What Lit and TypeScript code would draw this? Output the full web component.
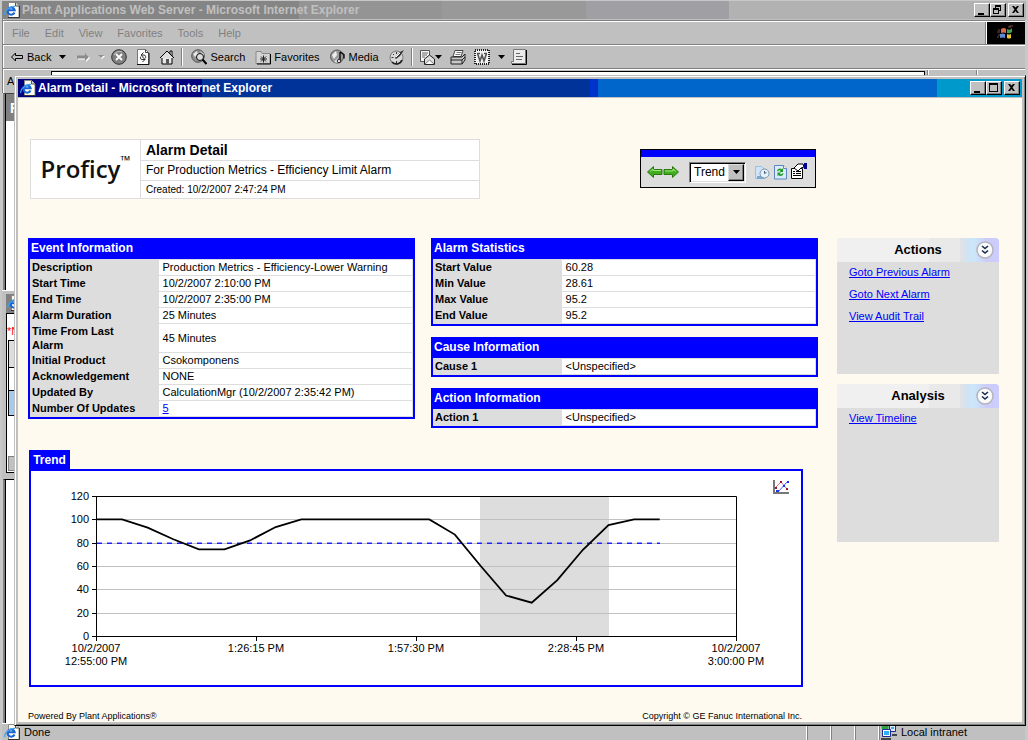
import { LitElement, html, svg, css, nothing, TemplateResult } from "lit";
import { customElement, property, state } from "lit/decorators.js";

const icon = (size: number, body: TemplateResult, w = size) =>
  html`<svg class="icon" width=${w} height=${size} viewBox="0 0 ${w} ${size}" aria-hidden="true">${body}</svg>`;

const icons: Record<string, () => TemplateResult> = {
  page: () => icon(16, svg`
    <path d="M4.500 .5h7l3.500 3.500v11.500h-10.500z" fill="#fffdf2" stroke="#8a8a8a" />
    <path d="M15.500 4v11.500H4" fill="none" stroke="#333" /><path d="M11.500 .5v3.500h3.500" fill="#ddd" stroke="#555" />
    <path d="M10.500 10.500a3.600 3.600 0 1 1 .2-2.300H4.500" fill="none" stroke="#1565d8" stroke-width="2" />
    <path d="M1 13C-.5 10 5 4 11 4.500" fill="none" stroke="#3fa0f0" stroke-width="1.300" />`),
  back: () => icon(12, svg`<path d="M1.500 6 5.500 2v2.500h7v3h-7V10z" fill="#c0c0c0" stroke="#000" />`, 14),
  forward: () => icon(12, svg`<path d="M14 7 10 3v2.500H2v3h8V11z" fill="#fff" /><path d="M13 6 9 2v2.500H1v3h8V10z" fill="#8c8c8c" />`, 14),
  caret: () => icon(4, svg`<path d="M0 0h7L3.500 4z" fill="#000" />`, 7),
  caretOff: () => icon(4, svg`<path d="M1 1h6L4 4z" fill="#fff" /><path d="M0 0h6L3 3z" fill="#909090" />`, 7),
  stop: () => icon(16, svg`
    <circle cx="8" cy="8" r="7.300" fill="#808080" stroke="#303030" />
    <path d="M3 6a6 6 0 0 1 8-3" fill="none" stroke="#c8c8c8" />
    <path d="m5 5 6 6m0-6-6 6" stroke="#fff" stroke-width="1.800" />`),
  refresh: () => icon(16, svg`
    <path d="M2.500 .5h8l3 3v12h-11z" fill="#fff" stroke="#777" /><path d="M14 4v11.500H2" fill="none" stroke="#111" /><path d="M10.500 .5v3h3" fill="none" stroke="#444" />
    <path d="M8.500 3.500 6 6l2.500 2M6 6h3c2 0 2 3 1 3.500M7.500 8 10 10.500 7.500 13M10 10.500H7C5 10.500 5 8 6 7.500" fill="none" stroke="#333" />`),
  home: () => icon(16, svg`
    <path d="M11 2h2v5h-2z" fill="#fff" stroke="#000" />
    <path d="M3 8h10v7H3z" fill="#e8e8e8" stroke="#000" /><path d="M1 9 8 2l7 7" fill="#ddd" stroke="#000" />
    <path d="M7 10h3v5H7z" fill="#555" />`),
  search: () => icon(16, svg`
    <circle cx="7" cy="7" r="6.300" fill="#909090" stroke="#555" />
    <path d="M2 5l4-3 1 3-3 3zM9 2l4 3-1 2z" fill="#e8e8e8" />
    <circle cx="9" cy="8" r="3.500" fill="#dcdcdc" stroke="#111" /><path d="m11.500 10.500 4 4.500" stroke="#000" stroke-width="2" />`),
  favorites: () => icon(16, svg`
    <path d="M1 2.500h5l1 2h8v10H1z" fill="#d4d4d4" stroke="#888" /><path d="M15.500 5v10H2" fill="none" stroke="#000" />
    <path d="M8.500 6.500v7M5 10h7M6 7.500l5 5m0-5-5 5" stroke="#222" />`),
  media: () => icon(16, svg`
    <circle cx="7" cy="7.500" r="6.500" fill="#9c9c9c" stroke="#555" /><path d="M2 6l4-4 1 4-3 4zM4 13l4-4v5z" fill="#eee" />
    <path d="M10 3v9M10 3l4 2.500v4" fill="none" stroke="#000" stroke-width="1.300" /><circle cx="9" cy="12" r="1.800" fill="#ddd" stroke="#222" />`),
  history: () => icon(16, svg`
    <circle cx="7.500" cy="8.500" r="6.500" fill="#d8d8d8" stroke="#777" />
    <path d="M3 13a6 6 0 0 0 10-2" fill="none" stroke="#222" stroke-width="1.800" />
    <path d="M7.500 3v2M2.500 8.500h2M7.500 12v2M4 5l1 1" stroke="#333" /><path d="m6 9 5-6 4-2-4 6-4 3z" fill="#333" /><path d="m7 8 4-4" stroke="#fff" />`),
  mail: () => icon(16, svg`
    <path d="M1.500 1.500h9v11h-9z" fill="#f4f4f4" stroke="#555" /><path d="M3 4h6M3 6h5M3 8h3" stroke="#666" />
    <path d="m5.500 10 5-4 5 4v5.500h-10z" fill="#ddd" stroke="#222" /><path d="m6 15 4.500-4 4.500 4" fill="#fff" stroke="#777" />`),
  print: () => icon(16, svg`
    <path d="M5 1.500h8l-2 6H3z" fill="#fff" stroke="#444" /><path d="M6.500 3.500h5M5.500 5.500h5" stroke="#777" />
    <path d="M1 8h11l3-3v6l-3 4H1z" fill="#c8c8c8" stroke="#222" /><path d="M1 11h11l3-3M12 11v4" fill="none" stroke="#222" />`),
  word: () => icon(16, svg`
    <path d="M1 1h14v14H1z" fill="#f4f4f4" stroke="#222" stroke-width="2" stroke-dasharray="1 1" />
    <path d="M3.500 4.500 6 12 8 6l2 6 2.500-7.500M3 4.500h3M10 4.500h3" fill="none" stroke="#555" stroke-width="1.600" />`),
  discuss: () => icon(16, svg`
    <path d="M2.500 .5h12v14h-14v-2h2z" fill="#ececec" stroke="#777" /><path d="M15.500 1v14.500H1" fill="none" stroke="#000" />
    <path d="M5 4.500h4M5 7.500h7M5 10.500h6" stroke="#666" />`),
  winLogo: () => icon(18, svg`
    <path d="M4 5q3-2 5 0v4q-3-1-5 0z" fill="#d9694a" /><path d="M10 5q3 2 5-1v4q-2 2-5 1z" fill="#3aa04a" />
    <path d="M3 10q3-1 5 0v4q-2-1-5 0z" fill="#5a8ad8" /><path d="M10 10q2 1 4 0v4q-2 1-4 0z" fill="#e8c830" />
    <path d="M1 6h2M0 8h3M1 11h2M0 13h2M12 2h4M11 3h3" stroke="#7a4a40" />`),
  arrowLeft: () => icon(14, svg`<path d="M.5 7 6.500 1.500v3H15v5H6.500v3z" fill="#3fae1c" stroke="#2b7a14" /><path d="M3 6.500 6 4v1.500h8" fill="none" stroke="#a5e47c" />`, 16),
  arrowRight: () => icon(14, svg`<path d="M15.500 7 9.500 1.500v3H1v5h8.500v3z" fill="#3fae1c" stroke="#2b7a14" /><path d="M2 6h8V4l3 2.500" fill="none" stroke="#a5e47c" />`, 16),
  timeDoc: () => icon(16, svg`
    <path d="M1.500 2.500h6l3 3v9h-9z" fill="#cfe4f6" stroke="#9fc0dc" /><path d="M3 12h7v3H3z" fill="#7ba6cf" />
    <circle cx="10.500" cy="9.500" r="4.500" fill="#e6f0f8" stroke="#7894b0" /><path d="M10.500 7v2.500l2-1" fill="none" stroke="#44617e" />`),
  reload: () => icon(16, svg`
    <path d="M2.500 1.500h9l3 3v10.500h-12z" fill="#dcebfc" stroke="#5a86c4" /><path d="M11.500 1.500v3h3" fill="#fff" stroke="#5a86c4" />
    <path d="M5 7c1-3 4-3 5-1.500L11 4v4H7.500l1.200-1.200C8 6 6.500 6 6 7.500zM11.500 9.500c-1 3-4 3-5 1.500L5.500 12.500v-4H9L7.800 9.800c.7.800 2.200.800 2.700-.5z" fill="#1d9a20" />`),
  properties: () => icon(18, svg`
    <path d="M1.500 5.500h11v10h-11z" fill="#fff" stroke="#000" /><path d="M3 8.500h2M6 8.500h5M3 10.500h2M6 10.500h5M3 12.500h8" stroke="#000" />
    <path d="m4 5 4-4h5l1 3-3 1-3 3z" fill="#fff" stroke="#000" /><path d="M14 0h3v6h-3z" fill="#000090" />`),
  chart: () => icon(16, svg`
    <path d="M1 1v13h15" fill="none" stroke="#777" stroke-width="2" />
    <path d="M3 8l5-5 6 7" fill="none" stroke="#d070a0" /><path d="M3 12h3L14 3" fill="none" stroke="#5060ff" />
    <path d="M2 8h2v2H2zM7 2h2v2H7zM13 9h2v2h-2z" fill="#a01020" /><path d="M3 11h3v2H3zM10 6h2v2h-2zM14 2h2v2h-2z" fill="#2030f0" />`),
  chevrons: () => icon(20, svg`
    <circle cx="10" cy="10" r="8" fill="#fafafa" stroke="#b4b4bc" stroke-width="1.500" />
    <path d="m7 6 3 2.500L13 6M7 10.500l3 2.500 3-2.500" fill="none" stroke="#1c2c50" stroke-width="1.600" />`),
  network: () => icon(16, svg`
    <circle cx="4" cy="3" r="3.500" fill="#30a040" /><path d="M8.500 1.500h6v6h-6z" fill="#e8e8ff" stroke="#1a2a90" /><path d="M10 3h3v2h-3z" fill="#30b0f0" />
    <path d="M1.500 5.500h8v7h-8z" fill="#fff" stroke="#1a2a90" /><path d="M3 7h5v4H3z" fill="#30b0f0" />
    <path d="M0 14h10v2H0zM11 10h5v2h-5z" fill="#444" />`),
};

const winGlyphs: Record<string, TemplateResult> = {
  Minimize: svg`<path d="M3 9h6v2H3z" />`,
  Restore: svg`<path d="M4 1h6v6H8V6h1V3H5v1H4zM2 4h6v6H2zm1 2v3h4V6z" fill-rule="evenodd" />`,
  Maximize: svg`<path d="M2 1h9v9H2zm1 2v6h7V3z" fill-rule="evenodd" />`,
  Close: svg`<path d="M3 2h2l1.500 1.500L8 2h2L7.500 5.500 10 9H8L6.500 7 5 9H3l2.500-3.500z" />`,
};

@customElement("title-bar")
class TitleBar extends LitElement {
  @property() heading = "";
  @property({ type: Array }) controls: string[] = [];
  @property({ type: Boolean, reflect: true }) inactive = false;
  static styles = css`
    :host {
      display: flex; align-items: center; height: 18px; padding: 0 2px; color: #fff;
      font: bold 12px/18px "Liberation Sans", Arial, sans-serif;
      background: linear-gradient(90deg, #000080 18.3%, #003399 18.3% 57%, #0033cc 57% 57.8%, #0066cc 57.8% 91.5%, #0099cc 91.5%);
    }
    :host([inactive]) {
      color: #c0c0c0;
      background: linear-gradient(90deg, #858585 29%, #949494 29% 43%, #999 43% 57%, #a0a0a4 57% 71%, #b2b2b2 71%);
    }
    .icon { flex: none; margin-right: 2px; }
    .heading { flex: 1; font-size: 12px; white-space: nowrap; overflow: hidden; }
    button {
      width: 16px; height: 14px; padding: 0; background: #c0c0c0; border: 1px solid;
      border-color: #fff #000 #000 #fff; box-shadow: inset -1px -1px #808080;
    }
    button:last-child { margin-left: 2px; }
    button svg { display: block; }
  `;
  render() {
    return html`${icons.page()}<span class="heading">${this.heading}</span>
      ${this.controls.map((c) => html`<button aria-label=${c}><svg width="13" height="12" viewBox="0 0 13 12">${winGlyphs[c]}</svg></button>`)}`;
  }
}

@customElement("info-table")
class InfoTable extends LitElement {
  @property() heading = "";
  @property({ type: Array }) rows: [string, string, boolean?][] = [];
  static styles = css`
    :host { display: block; border: 2px solid #00f; border-top: 0; background: #00f; }
    table { width: 100%; table-layout: fixed; border-collapse: separate; border-spacing: 1px; background: #ddd; }
    caption { background: #00f; color: #fff; font: bold 12px/20px "Liberation Sans", Arial, sans-serif; height: 21px; text-align: left; padding-left: 1px; }
    th, td { box-sizing: border-box; height: 15px; padding: 0 0 1px; font-size: 11px; line-height: 14px; text-align: left; }
    th { width: 33.3%; padding: 0 20px 1px 1px; white-space: nowrap; }
    th.wrap { white-space: normal; height: 28px; padding-bottom: 0; }
    td { background: #fff; padding-left: 4px; }
    a { color: #00f; }
  `;
  render() {
    return html`<table>
      <caption>${this.heading}</caption>
      <tbody>${this.rows.map(([k, v, link]) => html`<tr>
        <th scope="row" class=${k.length > 17 ? "wrap" : ""}>${k}</th>
        <td>${link ? html`<a href="#updates">${v}</a>` : v}</td></tr>`)}</tbody>
    </table>`;
  }
}

@customElement("side-panel")
class SidePanel extends LitElement {
  @property() heading = "";
  @property({ type: Array }) links: string[] = [];
  static styles = css`
    :host { display: flex; flex-direction: column; background: #ddd; border-radius: 4px 4px 0 0; overflow: hidden; }
    header {
      display: grid; grid-template-columns: 28px 1fr 28px; align-items: center; height: 24px;
      background: linear-gradient(90deg, #f0f0f0 57%, #e9e9e9 57% 76%, #dfe2e6 76% 78%, #cfe4f4 80%, #cce6fa 85%, #ccccf8 92%, #ccccff);
    }
    h2 { grid-column: 2; margin: 0; font: bold 13px/24px "Liberation Sans", Arial, sans-serif; text-align: center; }
    button { justify-self: center; padding: 0; border: 0; background: none; height: 20px; width: 20px; }
    svg { display: block; }
    ul { list-style: none; margin: 0; padding: 0 12px; }
    li { height: 22px; line-height: 20px; font-size: 11px; }
    a { color: #00f; }
  `;
  render() {
    return html`<header><h2>${this.heading}</h2><button aria-label="Collapse ${this.heading}">${icons.chevrons()}</button></header>
      <ul>${this.links.map((l) => html`<li><a href="#link">${l}</a></li>`)}</ul>`;
  }
}

@customElement("trend-chart")
class TrendChart extends LitElement {
  static styles = css`
    :host { display: block; }
    svg { display: block; width: 100%; }
    text { font: 11px "Liberation Sans", Arial, sans-serif; fill: #000; }
    .y { text-anchor: end; }
    .x { text-anchor: middle; }
    .grid { stroke: #c0c0c0; }
    .axis { stroke: #000; fill: none; }
    .line { stroke: #000; stroke-width: 1.8px; fill: none; }
    .limit { stroke: #22f; stroke-width: 1.5px; stroke-dasharray: 5 5; }
    .alarm { fill: #ddd; }
  `;
  /* One sample every five minutes. */
  private samples = [100, 100, 93, 83, 74.3, 74.3, 82, 93.5, 100, 100, 100, 100, 100, 100, 87, 60.3, 34.8, 28.6, 48, 74, 95.2, 100, 100];
  private labels = [["10/2/2007", "12:55:00 PM"], ["1:26:15 PM"], ["1:57:30 PM"], ["2:28:45 PM"], ["10/2/2007", "3:00:00 PM"]];
  render() {
    const y = (v: number) => 165.5 - (v * 140) / 120;
    const points = this.samples.map((v, i) => `${65.5 + i * 25.6},${y(v) - 0.4}`).join(" ");
    return html`<svg viewBox="0 0 770 214" role="img" aria-label="Trend">
      <rect class="alarm" x="449" y="26" width="129" height="139" />
      ${[20, 40, 60, 80, 100].map((v) => svg`<path class="grid" d="M66 ${Math.floor(y(v)) + 0.5}H705" />`)}
      <path class="limit" d="M66 72.250H629" />
      <path class="axis" d="M65.500 25.500H705.500V165.500H65.500Z" />
      ${[0, 20, 40, 60, 80, 100, 120].map((v) => svg`<path class="axis" d="M61 ${Math.floor(y(v)) + 0.5}H66" /><text class="y" x="58" y=${Math.floor(y(v)) + 4}>${v}</text>`)}
      ${this.labels.map((ls, i) => svg`<path class="axis" d="M${65.5 + i * 160} 165V170" />
        ${ls.map((l, j) => svg`<text class="x" x=${65 + i * 160} y=${181 + j * 13}>${l}</text>`)}`)}
      <polyline class="line" points=${points} />
    </svg>`;
  }
}

@customElement("app-root")
class AppRoot extends LitElement {
  @state() private view = "Trend";
  static styles = css`
    :host {
      display: flex; flex-direction: column; position: relative; min-height: 100vh; overflow: hidden;
      background: #c0c0c0; color: #000; font: 11px/14px "Liberation Sans", Arial, sans-serif;
    }
    * { box-sizing: border-box; }
    .icon { display: block; flex: none; }
    button { font: inherit; color: inherit; padding: 0; border: 0; background: none; display: flex; align-items: center; gap: 3px; }

    .browser { position: absolute; inset: 0; display: flex; flex-direction: column; padding: 1px 2px 0; background: #c8c8c8; }
    .bars { border-left: 1px solid #808080; margin-right: 1px; background: #c0c0c0; box-shadow: inset 1px 0 #fff; }
    .bar { display: flex; align-items: center; border-top: 1px solid #808080; box-shadow: inset 0 1px #fff; height: 24px; }
    .menus { color: #808080; gap: 15px; padding-left: 9px; margin-top: 1px; }
    .menus button { height: 20px; }
    .logo { margin-left: auto; align-self: stretch; width: 38px; margin-top: 1px; background: #000; display: flex; align-items: center; justify-content: center; box-shadow: -1px 0 #fff, -2px 0 #808080; }
    .tools { gap: 8px; padding-left: 7px; }
    .apart { margin-left: 2px; }
    .near { margin-left: -2px; }
    .pair { display: flex; align-items: center; }
    .sep { width: 2px; height: 18px; border-left: 1px solid #808080; border-right: 1px solid #fff; margin: 0 -2px; }
    .address { align-items: stretch; height: 25px; }
    .address label { width: 46px; padding: 5px 0 0 4px; }
    .address input { flex: 1; min-width: 0; margin: 2px 2px; border: 1px solid #000; background: #fff; padding: 0 4px; font: inherit; }
    .address .slot { width: 49px; border-left: 1px solid #808080; box-shadow: inset 1px 0 #fff; margin-top: 1px; }

    .peek { flex: 1; display: flex; flex-direction: column; min-height: 0; }
    .pane { border-left: 2px solid #808080; box-shadow: inset 1px 0 #000; background: #fff; margin-left: 1px; }
    .pane.first { height: 197px; border-top: 1px solid #404040; }
    .pane.rest { flex: 1; border-top: 1px solid #000; }
    .pane .band { height: 27px; background: #808080; color: #fff; font: bold 14px/28px "Liberation Sans", Arial, sans-serif; padding-left: 4px; margin-left: 1px; }
    .mini { height: 189px; padding: 3px 0 0 4px; background: #c0c0c0; border-top: 1px solid #fff; }
    .mini .cap { height: 19px; background: #808080; padding: 1px 0 0 1px; overflow: hidden; }
    .mini .doc { height: 160px; border: 1px solid #000; background: #fff; padding-top: 10px; }
    .mini .note { color: #f00; height: 16px; }
    .mini .cell { border: 1px solid #000; border-bottom: 0; height: 27px; background: #ddd; margin-left: 1px; }
    .mini .cell.blank { height: 23px; background: #fff; }
    .mini .cell.picked { height: 26px; background: #a6caf0; border-bottom: 1px solid #000; }
    .mini .thumb { width: 16px; height: 15px; margin: 40px 0 0 1px; background: #c0c0c0; border: 1px solid #808080; }

    .status { display: flex; height: 17px; border-top: 1px solid #fff; line-height: 16px; margin-right: 1px; background: #c0c0c0; }
    .status div { display: flex; align-items: center; gap: 4px; width: 24px; border-right: 1px solid #fff; border-left: 1px solid #808080; white-space: nowrap; }
    .status .message { flex: 1; padding-left: 2px; border-left: 0; }
    .status .zone { width: 146px; padding-left: 1px; border-right: 0; }

    .window {
      position: relative; flex: 1; margin: 75px 2px 14px 14px; padding: 3px; background: #c0c0c0;
      border: 1px solid; border-color: #c0c0c0 #000 #000 #c0c0c0; box-shadow: inset 1px 1px #fff, inset -1px -1px #808080;
      display: flex; flex-direction: column;
    }
    main {
      flex: 1; margin-top: 1px; background: #fffaf0; padding: 41px 23px 0 10px;
      display: grid; grid-template-columns: minmax(0, 1fr) 162px; column-gap: 19px; align-content: start;
    }
    .top { grid-column: 1; display: flex; justify-content: space-between; align-items: flex-start; padding: 0 2px; height: 99px; }
    .brand { width: 450px; display: grid; grid-template-columns: 109px 1fr; background: #fff; border: 1px solid #ddd; }
    .mark { display: flex; align-items: center; justify-content: center; font: 600 24px/24px "Open Sans", "Liberation Sans", sans-serif; color: #111; }
    .mark sup { font-size: 13px; line-height: 13px; align-self: flex-start; margin-top: 14px; }
    .titles { border-left: 1px solid #ddd; }
    .titles > * { margin: 0; padding-left: 5px; font-weight: normal; }
    .titles h1 { font-size: 14px; font-weight: bold; line-height: 20px; }
    .titles h2 { font-size: 12px; line-height: 19px; border: solid #ddd; border-width: 1px 0; height: 21px; }
    .titles p { font-size: 10px; line-height: 17px; }
    .palette { width: 176px; margin-top: 10px; border: 1px solid #000; background: #ddd; }
    .grip { height: 7px; background: #00f; }
    .controls { height: 30px; display: flex; align-items: center; padding-left: 6px; }
    .controls .arrows { display: flex; margin-right: 10px; }
    .picker { display: grid; width: 57px; height: 21px; margin-right: 8px; }
    .picker > * { grid-area: 1 / 1; }
    .picker select {
      appearance: none; width: 57px; height: 21px; padding: 0 0 0 4px; border-radius: 0; background: #fff; color: #000;
      border: 1px solid; border-color: #808080 #fff #fff #808080; box-shadow: inset 1px 1px #000, inset -1px -1px #ddd;
      font: 12px/16px "Liberation Sans", Arial, sans-serif;
    }
    .picker .drop {
      justify-self: end; align-self: center; margin-right: 2px; width: 16px; height: 17px; background: #c0c0c0; pointer-events: none;
      border: 1px solid; border-color: #ddd #000 #000 #ddd; box-shadow: inset -1px -1px #808080; display: flex; align-items: center; justify-content: center;
    }
    .controls .buttons { display: flex; gap: 2px; align-items: center; }

    .info { grid-column: 1; display: grid; grid-template-columns: 1fr 1fr; gap: 16px; align-items: start; height: 212px; }
    .stack { display: grid; gap: 11px; }
    aside { grid-column: 2; grid-row: 2 / 5; display: grid; gap: 10px; align-content: start; }
    .actions { min-height: 136px; }
    .analysis { min-height: 158px; }
    .trend { grid-column: 1; margin: 0 15px 0 1px; }
    .trend h2 { margin: 0; width: 41px; height: 19px; background: #00f; color: #fff; font: bold 12px/20px "Liberation Sans", Arial, sans-serif; text-align: center; }
    .plot { border: 2px solid #00f; background: #fff; position: relative; }
    .plot .options { position: absolute; top: 8px; right: 12px; }
    footer { grid-column: 1; display: flex; justify-content: space-between; margin: 23px 16px 0 0; font-size: 9px; line-height: 12px; }
  `;

  private tool(name: string, label = "", cls = "", text = "") {
    return html`<button class=${cls} aria-label=${label || text}>${icons[name]()}${text || nothing}</button>`;
  }

  private browser() {
    return html`<div class="browser">
      <title-bar inactive heading="Plant Applications Web Server - Microsoft Internet Explorer" .controls=${["Minimize", "Restore", "Close"]}></title-bar>
      <div class="bars">
        <nav class="bar menus">${["File", "Edit", "View", "Favorites", "Tools", "Help"].map((m) => html`<button>${m}</button>`)}
          <span class="logo">${icons.winLogo()}</span></nav>
        <div class="bar tools">
          ${this.tool("back", "", "", "Back")}${this.tool("caret", "Back list")}${this.tool("forward", "Forward", "apart")}${this.tool("caretOff", "Forward list")}
          ${this.tool("stop", "Stop", "near")}${this.tool("refresh", "Refresh")}${this.tool("home", "Home")}
          <span class="sep"></span>
          ${this.tool("search", "", "apart", "Search")}${this.tool("favorites", "", "apart", "Favorites")}${this.tool("media", "", "apart", "Media")}${this.tool("history", "History", "apart")}
          <span class="sep"></span>
          <span class="pair">${this.tool("mail", "Mail")}${this.tool("caret", "Mail list")}</span>
          ${this.tool("print", "Print")}${this.tool("word", "Edit with Word")}${this.tool("caret", "Edit list")}${this.tool("discuss", "Discuss", "near")}
        </div>
        <div class="bar address"><label for="addr">A</label><input id="addr" /><span class="slot"></span><span class="slot"></span></div>
      </div>
      <div class="peek">
        <div class="pane first"><div class="band">F</div></div>
        <div class="mini">
          <div class="cap">${icons.page()}</div>
          <div class="doc"><div class="note">*N</div><div class="cell"></div><div class="cell blank"></div><div class="cell picked"></div><div class="thumb"></div></div>
        </div>
        <div class="pane rest"></div>
      </div>
      <div class="status">
        <div class="message">${icons.page()}Done</div><div></div><div></div><div></div>
        <div class="zone">${icons.network()}Local intranet</div>
      </div>
    </div>`;
  }

  render() {
    return html`${this.browser()}
      <div class="window">
        <title-bar heading="Alarm Detail - Microsoft Internet Explorer" .controls=${["Minimize", "Maximize", "Close"]}></title-bar>
        <main>
          <div class="top">
            <div class="brand">
              <div class="mark">Proficy<sup>™</sup></div>
              <div class="titles"><h1>Alarm Detail</h1><h2>For Production Metrics - Efficiency Limit Alarm</h2><p>Created: 10/2/2007 2:47:24 PM</p></div>
            </div>
            <div class="palette">
              <div class="grip"></div>
              <div class="controls">
                <span class="arrows">${this.tool("arrowLeft", "Previous")}${this.tool("arrowRight", "Next")}</span>
                <span class="picker">
                  <select aria-label="View" @change=${(e: Event) => (this.view = (e.target as HTMLSelectElement).value)}><option>${this.view}</option></select>
                  <span class="drop">${icons.caret()}</span>
                </span>
                <span class="buttons">${this.tool("timeDoc", "Time range")}${this.tool("reload", "Refresh")}${this.tool("properties", "Properties")}</span>
              </div>
            </div>
          </div>
          <div class="info">
            <info-table heading="Event Information" .rows=${[
              ["Description", "Production Metrics - Efficiency-Lower Warning"],
              ["Start Time", "10/2/2007 2:10:00 PM"],
              ["End Time", "10/2/2007 2:35:00 PM"],
              ["Alarm Duration", "25 Minutes"],
              ["Time From Last Alarm", "45 Minutes"],
              ["Initial Product", "Csokomponens"],
              ["Acknowledgement", "NONE"],
              ["Updated By", "CalculationMgr (10/2/2007 2:35:42 PM)"],
              ["Number Of Updates", "5", true],
            ]}></info-table>
            <div class="stack">
              <info-table heading="Alarm Statistics" .rows=${[["Start Value", "60.28"], ["Min Value", "28.61"], ["Max Value", "95.2"], ["End Value", "95.2"]]}></info-table>
              <info-table heading="Cause Information" .rows=${[["Cause 1", "<Unspecified>"]]}></info-table>
              <info-table heading="Action Information" .rows=${[["Action 1", "<Unspecified>"]]}></info-table>
            </div>
          </div>
          <aside>
            <side-panel class="actions" heading="Actions" .links=${["Goto Previous Alarm", "Goto Next Alarm", "View Audit Trail"]}></side-panel>
            <side-panel class="analysis" heading="Analysis" .links=${["View Timeline"]}></side-panel>
          </aside>
          <section class="trend">
            <h2>Trend</h2>
            <div class="plot"><trend-chart></trend-chart>${this.tool("chart", "Chart options", "options")}</div>
          </section>
          <footer><span>Powered By Plant Applications®</span><span>Copyright © GE Fanuc International Inc.</span></footer>
        </main>
      </div>`;
  }
}
